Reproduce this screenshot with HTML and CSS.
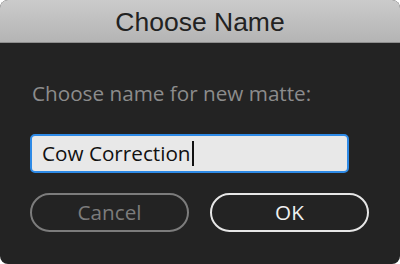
FILE: index.html
```html
<!DOCTYPE html>
<html lang="en">
<head>
    <meta charset="UTF-8">
    <title>Choose Name</title>
    <link rel="stylesheet" href="styles.css">
</head>
<body>

    <div class="dialog">
        <div class="title-bar">Choose Name</div>

        <div class="dialog-body">
            <div class="prompt">Choose name for new matte:</div>
            <div class="name-field">Cow Correction<span class="caret"></span></div>

            <div class="buttons">
                <div class="btn btn-cancel">Cancel</div>
                <div class="btn btn-ok">OK</div>
            </div>
        </div>
    </div>

</body>
</html>
```

FILE: styles.css
```css
/* General Styling */
body {
    margin: 0;
    background: #ffffff;
    font-family: 'Open Sans', 'Noto Sans', sans-serif;
}

/* Window */
.dialog {
    width: 400px;
    height: 264px;
    border-radius: 8px;
    overflow: hidden;
    background: #232323;
    display: flex;
    flex-direction: column;
}

/* Title */
.title-bar {
    height: 42px;
    background: linear-gradient(180deg, #cbcbcb, #b4b4b4);
    border-bottom: 1px solid #8e8e8e;
    color: #222222;
    font-family: 'Liberation Sans', Arial, sans-serif;
    font-size: 26.5px;
    line-height: 44px;
    text-align: center;
}

/* Body */
.dialog-body {
    padding: 0 30px;
    display: flex;
    flex-direction: column;
}

.prompt {
    margin: 36px 0 0 2px;
    color: #8c8c8c;
    font-size: 20.7px;
    line-height: 28px;
}

.name-field {
    margin-top: 27px;
    margin-right: 21px;
    height: 35px;
    border: 2px solid #2e8ae6;
    border-radius: 5px;
    background: #e8e8e8;
    color: #111111;
    font-size: 20.7px;
    line-height: 35px;
    padding-left: 10px;
    display: flex;
    align-items: center;
}

.caret {
    width: 2px;
    height: 25px;
    background: #111111;
    margin-left: 1px;
}

/* Buttons */
.buttons {
    margin-top: 20px;
    display: flex;
    gap: 21px;
}

.btn {
    width: 155px;
    height: 35px;
    border-radius: 20px;
    border: 2px solid;
    font-size: 20.7px;
    line-height: 35px;
    text-align: center;
}

.btn-cancel {
    border-color: #7c7c7c;
    color: #7c7c7c;
}

.btn-ok {
    border-color: #e6e6e6;
    color: #f0f0f0;
}
```
